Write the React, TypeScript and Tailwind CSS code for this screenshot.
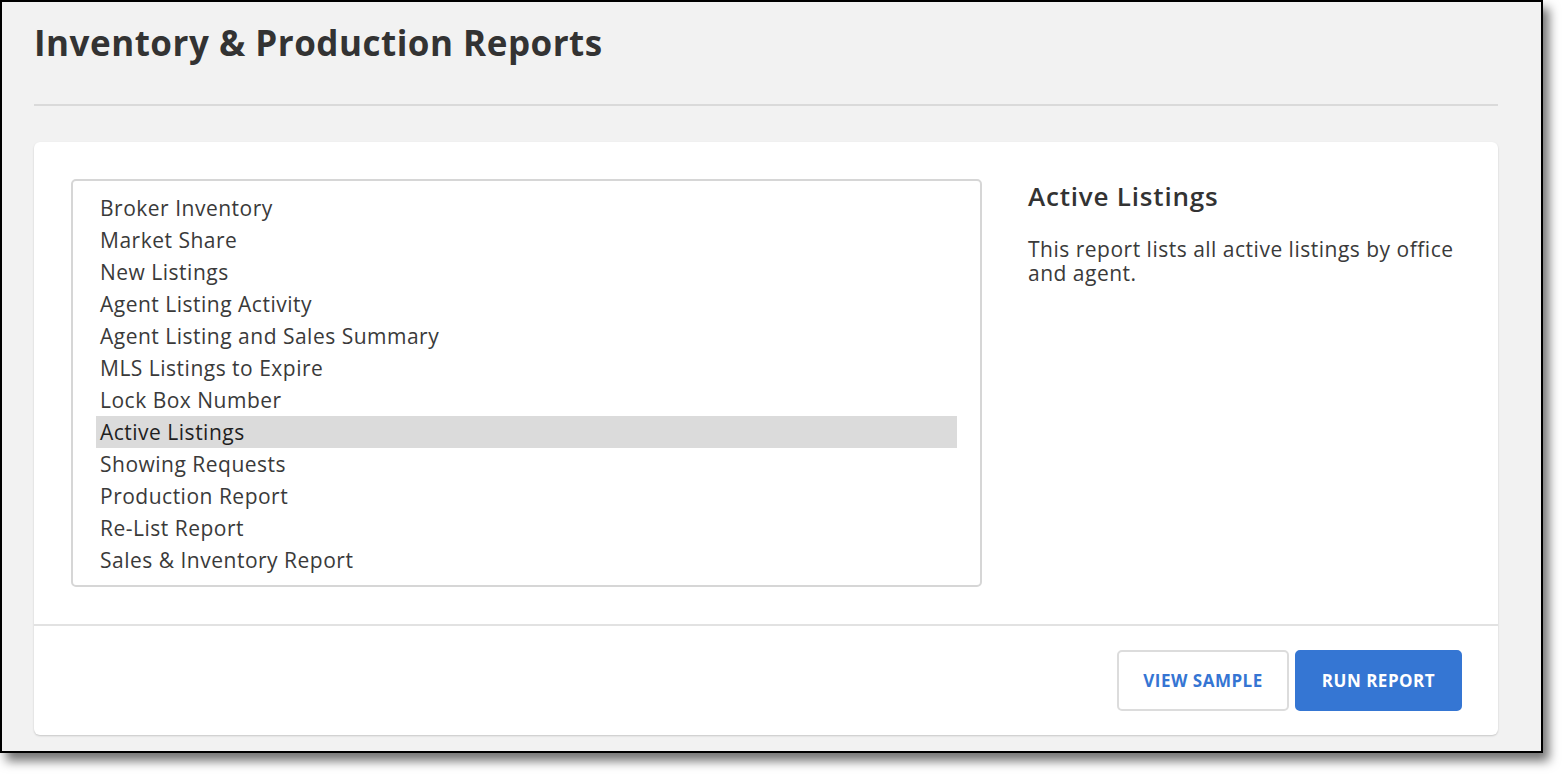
import React, { useState } from 'react';

const REPORTS = [
  'Broker Inventory',
  'Market Share',
  'New Listings',
  'Agent Listing Activity',
  'Agent Listing and Sales Summary',
  'MLS Listings to Expire',
  'Lock Box Number',
  'Active Listings',
  'Showing Requests',
  'Production Report',
  'Re-List Report',
  'Sales & Inventory Report',
];

const DESCRIPTIONS: Record<string, string> = {
  'Active Listings': 'This report lists all active listings by office and agent.',
};

export default function App() {
  const [selected, setSelected] = useState('Active Listings');

  return (
    <div className="w-[1562px] h-[774px] bg-white overflow-hidden" style={{ fontFamily: '"Open Sans", "Liberation Sans", sans-serif' }}>
      {/* Window */}
      <div className="w-[1543px] h-[753px] border-2 border-black bg-[#f2f2f2] shadow-[6px_8px_10px_rgba(0,0,0,0.55)] pl-[32px] pt-[18px]">
        <h1 className="text-[35px] leading-[46px] font-bold tracking-[0.5px] text-[#333333]">Inventory &amp; Production Reports</h1>
        <div className="mt-[38px] w-[1464px] h-[2px] bg-[#dadada]" />

        {/* Card */}
        <div className="mt-[36px] w-[1464px] bg-white rounded-[6px] shadow-[0_1px_2px_rgba(0,0,0,0.18)]">
          <div className="flex p-[37px]">
            <div className="w-[911px] h-[408px] border-2 border-[#d6d6d6] rounded-[5px] pt-[11px] px-[23px]">
              {REPORTS.map((r) => (
                <div
                  key={r}
                  onClick={() => setSelected(r)}
                  className={
                    r === selected
                      ? 'h-[32px] leading-[32px] pl-[4px] text-[21px] tracking-[0.5px] text-[#1f1f1f] bg-[#dbdbdb] cursor-pointer'
                      : 'h-[32px] leading-[32px] pl-[4px] text-[21px] tracking-[0.5px] text-[#3a3a3a] cursor-pointer'
                  }
                >
                  {r}
                </div>
              ))}
            </div>

            <div className="ml-[46px] w-[433px]">
              <h2 className="text-[26px] leading-[34px] font-semibold tracking-[0.8px] text-[#333333]">{selected}</h2>
              <p className="mt-[24px] text-[21px] leading-[24px] tracking-[0.5px] text-[#3a3a3a]">
                {DESCRIPTIONS[selected] ?? 'This report lists all active listings by office and agent.'}
              </p>
            </div>
          </div>

          <div className="border-t-2 border-[#e2e2e2] px-[36px] py-[24px] flex justify-end gap-[6px]">
            <button className="w-[172px] h-[61px] rounded-[5px] border-2 border-[#dcdcdc] bg-white text-[17px] font-bold tracking-[0.5px] text-[#3575d3]">
              VIEW SAMPLE
            </button>
            <button className="w-[167px] h-[61px] rounded-[5px] border-2 border-[#3576d3] bg-[#3576d3] text-[17px] font-bold tracking-[0.5px] text-white">
              RUN REPORT
            </button>
          </div>
        </div>
      </div>
    </div>
  );
}
